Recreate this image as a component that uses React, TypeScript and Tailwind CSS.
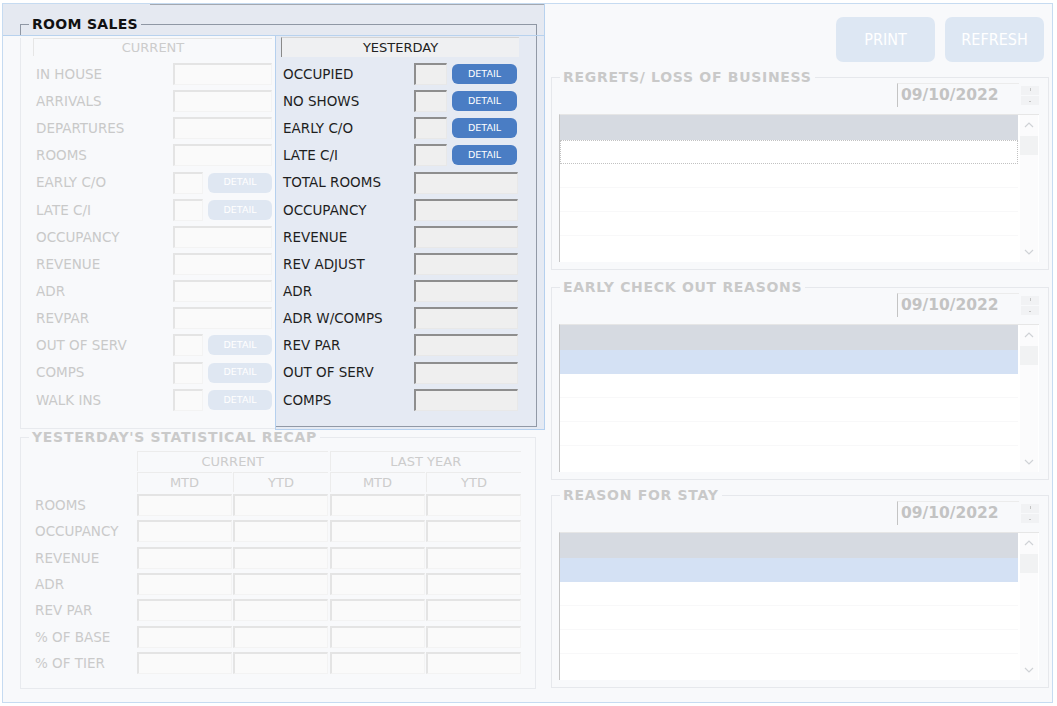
import React from "react";

type Row = { label: string; kind: "wide" | "detail" };

const currentRows: Row[] = [
  { label: "IN HOUSE", kind: "wide" },
  { label: "ARRIVALS", kind: "wide" },
  { label: "DEPARTURES", kind: "wide" },
  { label: "ROOMS", kind: "wide" },
  { label: "EARLY C/O", kind: "detail" },
  { label: "LATE C/I", kind: "detail" },
  { label: "OCCUPANCY", kind: "wide" },
  { label: "REVENUE", kind: "wide" },
  { label: "ADR", kind: "wide" },
  { label: "REVPAR", kind: "wide" },
  { label: "OUT OF SERV", kind: "detail" },
  { label: "COMPS", kind: "detail" },
  { label: "WALK INS", kind: "detail" },
];

const yesterdayRows: Row[] = [
  { label: "OCCUPIED", kind: "detail" },
  { label: "NO SHOWS", kind: "detail" },
  { label: "EARLY C/O", kind: "detail" },
  { label: "LATE C/I", kind: "detail" },
  { label: "TOTAL ROOMS", kind: "wide" },
  { label: "OCCUPANCY", kind: "wide" },
  { label: "REVENUE", kind: "wide" },
  { label: "REV ADJUST", kind: "wide" },
  { label: "ADR", kind: "wide" },
  { label: "ADR W/COMPS", kind: "wide" },
  { label: "REV PAR", kind: "wide" },
  { label: "OUT OF SERV", kind: "wide" },
  { label: "COMPS", kind: "wide" },
];

const recapRows = ["ROOMS", "OCCUPANCY", "REVENUE", "ADR", "REV PAR", "% OF BASE", "% OF TIER"];

const fadedBox =
  "h-[22px] border-t-2 border-l-2 border-t-[#e4e4e4] border-l-[#e4e4e4] border-r border-b border-r-[#f3f3f3] border-b-[#f3f3f3] bg-[#fafafa]";
const activeBox =
  "h-[22px] border-t-2 border-l-2 border-t-[#8e8e8e] border-l-[#8e8e8e] border-r border-b border-r-[#e8e8e8] border-b-[#e8e8e8] bg-[#efefef]";

const Chevron = ({ up }: { up?: boolean }) => (
  <svg width="10" height="6" viewBox="0 0 10 6" className="block">
    <polyline
      points={up ? "1,5 5,1 9,5" : "1,1 5,5 9,1"}
      fill="none"
      stroke="#cfd2d6"
      strokeWidth="1.2"
    />
  </svg>
);

const ReasonBox = ({ title, focusRow, mt }: { title: string; focusRow: "dotted" | "blue"; mt: string }) => (
  <fieldset className={`${mt} ml-[6px] w-[498px] border border-[#e6e8ec]`}>
    <legend className="ml-[8px] px-[3px] text-[14px] leading-[14px] font-bold tracking-[0.7px] text-[#c9c9c9]">{title}</legend>
    <div className="-mt-[1px] flex justify-end gap-[2px] pr-[9px]">
      <div className="w-[122px] h-[24px] border-l border-l-[#c4c4c4] border-t border-t-[#ececec] pl-[3px] flex items-center text-[15.5px] font-bold text-[#c3c3c3]">
        09/10/2022
      </div>
      <div className="w-[18px] h-[24px] flex flex-col gap-[1px] pt-[3px]">
        <div className="h-[9px] bg-[#f1f2f4] flex items-start justify-center">
          <div className="w-[1px] h-[3px] mt-[2px] bg-[#c4c4c4]" />
        </div>
        <div className="h-[9px] bg-[#f1f2f4] flex items-end justify-center">
          <div className="w-[2px] h-[1px] mb-[3px] bg-[#c4c4c4]" />
        </div>
      </div>
    </div>
    <div className="mt-[7px] ml-[7px] mb-[7px] w-[480px] h-[148px] border-l border-l-[#c6c6c6] border-t border-t-[#e6e6e6] bg-white flex">
      <div className="w-[458px] flex flex-col">
        <div className="h-[25px] bg-[#d6dae1]" />
        {focusRow === "dotted" ? (
          <div className="h-[24px] border border-dotted border-[#c2c2c2]" />
        ) : (
          <div className="h-[24px] bg-[#d4e1f4]" />
        )}
        <div className="h-[24px] border-b border-[#f8f8f9]" />
        <div className="h-[24px] border-b border-[#f8f8f9]" />
        <div className="h-[24px] border-b border-[#f8f8f9]" />
      </div>
      <div className="ml-[2px] w-[18px] flex flex-col bg-[#fbfbfc]">
        <div className="h-[20px] flex items-center justify-center">
          <Chevron up />
        </div>
        <div className="mt-[1px] h-[19px] bg-[#f1f2f3]" />
        <div className="flex-1" />
        <div className="h-[20px] flex items-center justify-center">
          <Chevron />
        </div>
      </div>
    </div>
  </fieldset>
);

export default function App() {
  return (
    <div className="w-[1057px] h-[706px] bg-white pt-[3px] pl-[2px] font-['DejaVu_Sans',sans-serif]">
      <div className="w-[1051px] h-[700px] border border-[#c6dbf1] bg-[#f8f9fb] flex">
        {/* left column */}
        <div className="w-[542px] flex flex-col">
          {/* highlighted strip with room sales title */}
          <div className="h-[32px] bg-[#e5e9f1] border-b border-[#b8d2ee] border-r flex flex-col">
            <div className="ml-[147px] h-[1px] bg-[#a3a8b0]" />
            <fieldset className="mt-[10px] ml-[17px] w-[517px] h-[20px] border-t border-l border-r border-[#8f97a4]">
              <legend className="ml-[8px] px-[3px] text-[14px] leading-[18px] font-bold tracking-[0.3px] text-[#111111]">ROOM SALES</legend>
            </fieldset>
          </div>

          <div className="flex h-[394px]">
            {/* faded current */}
            <div className="w-[272px]">
              <div className="ml-[17px] w-[255px] h-[391px] border-l border-b border-[#e8eaee]">
                <div className="mt-[2px] ml-[12px] w-[239px] h-[18px] border-l border-t border-[#e6e6e6] flex items-center justify-center text-[13px] text-[#cccccc]">
                  CURRENT
                </div>
                <div className="mt-[4.4px] flex flex-col">
                  {currentRows.map((r) => (
                    <div key={r.label} className="h-[27.15px] flex items-center">
                      <div className="pl-[15px] w-[152px] text-[13.5px] text-[#c9c9c9] whitespace-nowrap">{r.label}</div>
                      {r.kind === "wide" ? (
                        <div className={`${fadedBox} w-[99px]`} />
                      ) : (
                        <>
                          <div className={`${fadedBox} w-[30px]`} />
                          <div className="ml-[5px] w-[64px] h-[20px] rounded-[6px] bg-[#dfe7f2] flex items-center justify-center text-[9.5px] text-white">
                            DETAIL
                          </div>
                        </>
                      )}
                    </div>
                  ))}
                </div>
              </div>
            </div>

            {/* highlighted yesterday panel */}
            <div className="w-[270px] h-[394px] border-l border-r border-b border-[#b5d0ee] bg-[#e5eaf3]">
              <div className="w-[261px] h-[391px] border-r border-b border-[#9199a6] pl-[5px] pt-[1px]">
                <div className="w-[238px] h-[20px] border-l border-l-[#8a8a8a] border-t border-t-[#d4d4d4] bg-[#eff0f2] flex items-center justify-center text-[13px] text-[#222222]">
                  YESTERDAY
                </div>
                <div className="mt-[3.4px] flex flex-col">
                  {yesterdayRows.map((r) => (
                    <div key={r.label} className="h-[27.15px] flex items-center">
                      <div className="ml-[2px] w-[131px] text-[13.5px] text-[#1e1e1e] whitespace-nowrap">{r.label}</div>
                      {r.kind === "wide" ? (
                        <div className={`${activeBox} w-[104px]`} />
                      ) : (
                        <>
                          <div className={`${activeBox} w-[33px]`} />
                          <div className="ml-[5px] w-[65px] h-[20px] rounded-[6px] bg-[#4a7dc4] flex items-center justify-center text-[9.5px] text-white">
                            DETAIL
                          </div>
                        </>
                      )}
                    </div>
                  ))}
                </div>
              </div>
            </div>
          </div>

          {/* statistical recap */}
          <fieldset className="ml-[17px] w-[516px] h-[259px] border border-[#e8eaee]">
            <legend className="ml-[8px] px-[3px] text-[14px] leading-[14px] font-bold tracking-[0.7px] text-[#cacaca]">
              YESTERDAY'S STATISTICAL RECAP
            </legend>
            <div className="mt-[7px] grid grid-cols-[114px_95px_95px_95px_95px] gap-x-[1.5px] gap-y-[1px] text-[13px] text-[#cccccc]">
              <div />
              <div className="col-span-2 h-[20px] border-l border-t border-[#ececec] flex items-center justify-center">CURRENT</div>
              <div className="col-span-2 h-[20px] border-l border-t border-[#ececec] flex items-center justify-center">LAST YEAR</div>
              <div />
              {["MTD", "YTD", "MTD", "YTD"].map((t, i) => (
                <div key={i} className="h-[20px] border-l border-t border-[#ececec] flex items-center justify-center">
                  {t}
                </div>
              ))}
            </div>
            <div className="flex flex-col">
              {recapRows.map((r) => (
                <div key={r} className="h-[26.3px] grid grid-cols-[114px_95px_95px_95px_95px] gap-x-[1.5px] items-center">
                  <div className="pl-[14px] text-[13.5px] text-[#cacaca] whitespace-nowrap">{r}</div>
                  <div className={fadedBox} />
                  <div className={fadedBox} />
                  <div className={fadedBox} />
                  <div className={fadedBox} />
                </div>
              ))}
            </div>
          </fieldset>
        </div>

        {/* right column */}
        <div className="w-[507px] flex flex-col">
          <div className="mt-[13px] flex justify-end gap-[10px] pr-[8px]">
            {["PRINT", "REFRESH"].map((t) => (
              <div
                key={t}
                className="w-[99px] h-[45px] rounded-[7px] bg-[#dde7f3] flex items-center justify-center text-[16px] text-white font-['Liberation_Sans_Narrow','DejaVu_Sans_Condensed',sans-serif]"
              >
                {t}
              </div>
            ))}
          </div>
          <ReasonBox title="REGRETS/ LOSS OF BUSINESS" focusRow="dotted" mt="mt-[8px]" />
          <ReasonBox title="EARLY CHECK OUT REASONS" focusRow="blue" mt="mt-[10px]" />
          <ReasonBox title="REASON FOR STAY" focusRow="blue" mt="mt-[8px]" />
        </div>
      </div>
    </div>
  );
}
